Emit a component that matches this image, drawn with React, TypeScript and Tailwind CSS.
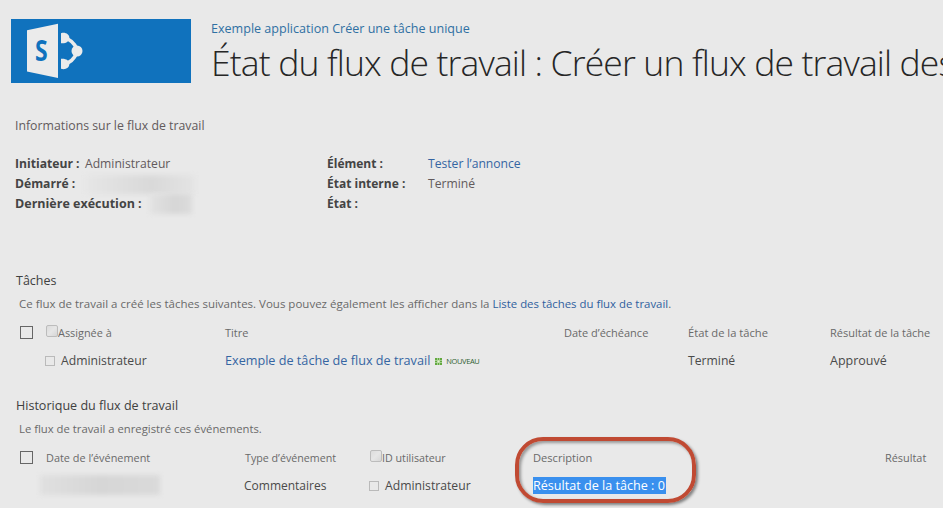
import type { ReactNode } from "react";

function SharePointLogo() {
  return (
    <svg className="block h-16 w-[180px]" viewBox="0 0 180 64">
      <path d="M16 11.2 47 4.8V59L16 52.6Z" fill="#ebebeb" />
      <text
        transform="translate(23.9 42) scale(0.82 1)"
        fontFamily="Open Sans, sans-serif"
        fontWeight="700"
        fontSize="28"
        fill="#1072bd"
      >
        S
      </text>
      <path
        d="M54 19.3C59.5 20.5 63 24 65.5 29.5M54 44.7C59.5 43.5 63 40 65.5 34.5"
        fill="none"
        stroke="#ebebeb"
        strokeWidth="3.6"
      />
      <circle cx="66" cy="32" r="5.5" fill="#ebebeb" />
      <path d="M50 14.3C54 12.8 58.4 15.2 58.4 19C58.4 22.6 54.6 24.8 50 24.2Z" fill="#ebebeb" />
      <path d="M50 49.7C54 51.2 58.4 48.8 58.4 45C58.4 41.4 54.6 39.2 50 39.8Z" fill="#ebebeb" />
    </svg>
  );
}

function Checkbox() {
  return <span className="mt-[3px] block size-[13px] shrink-0 border border-[#666]" />;
}

function PresenceLarge() {
  return (
    <span className="mt-0.5 block size-3 shrink-0 rounded-[2px] border border-[#bcbcbc] bg-linear-to-br from-[#dcdcdc] via-[#e6e6e6] to-[#d6d6d6]" />
  );
}

function PresenceSmall() {
  return <span className="mt-[5px] block size-[10px] shrink-0 border border-[#bababa]" />;
}

function Cell({ className, children }: { className: string; children?: ReactNode }) {
  return <div className={`flex shrink-0 whitespace-nowrap ${className}`}>{children}</div>;
}

function NewBadge() {
  return (
    <span className="ml-[5px] flex items-center">
      <svg className="block size-[7px]" viewBox="0 0 7 7">
        <rect width="7" height="7" fill="#a5cf8e" />
        <path d="M0 0h2v2H0zM5 0h2v2H5zM0 5h2v2H0zM5 5h2v2H5zM3 0h1v2H3zM3 5h1v2H3zM0 3h2v1H0zM5 3h2v1H5z" fill="#62a83f" />
        <rect x="2.5" y="2.5" width="2" height="2" fill="#e3f2cf" />
      </svg>
      <span className="-mt-px ml-1 text-[7.5px] leading-5 tracking-[-0.4px] text-[#2f6030]">NOUVEAU</span>
    </span>
  );
}

export default function App() {
  return (
    <div className="relative h-[508px] w-[943px] overflow-hidden bg-[#e9e9e9] font-['Open_Sans',sans-serif] text-[12.5px] leading-5 text-[#4a4a4a]">
      <header className="flex h-[116px] pt-[19px] pl-[11px]">
        <div className="h-16 w-[180px] shrink-0 bg-[#1072bd]">
          <SharePointLogo />
        </div>
        <div className="ml-5 whitespace-nowrap">
          <a className="block text-[12.55px] leading-5 text-[#2f70a3]">Exemple application Créer une tâche unique</a>
          <h1 className="text-[35.5px] leading-[46px] font-light tracking-[-0.85px] text-[#262626]">
            État du flux de travail : Créer un flux de travail des
          </h1>
        </div>
      </header>

      <section className="pl-[15px]">
        <h2 className="text-[12.3px] text-[#625a5c]">Informations sur le flux de travail</h2>
        <div className="mt-[18px] flex text-[12.15px] text-[#625a5c]">
          <dl className="w-[312px]">
            <div className="flex">
              <dt className="w-[70px] font-bold text-[#444]">Initiateur :</dt>
              <dd className="">Administrateur</dd>
            </div>
            <div className="flex">
              <dt className="w-[70px] font-bold text-[#444]">Démarré :</dt>
              <dd className="mt-px h-[19px] w-[110px] bg-linear-to-r from-[#e6e6e6] via-[#d9d9d9] via-60% to-[#e4e4e4] blur-[2px]" />
            </div>
            <div className="flex">
              <dt className="w-[135px] text-[12.5px] font-bold text-[#444]">Dernière exécution :</dt>
              <dd className="h-5 w-[42px] bg-linear-to-r from-[#e2e2e2] via-[#d6d6d6] via-60% to-[#dcdcdc] blur-[2px]" />
            </div>
          </dl>
          <dl>
            <div className="flex">
              <dt className="w-[101px] text-[12px] font-bold text-[#444]">Élément :</dt>
              <dd className="text-[#3565a2]">Tester l’annonce</dd>
            </div>
            <div className="flex">
              <dt className="w-[101px] text-[12px] font-bold text-[#444]">État interne :</dt>
              <dd>Terminé</dd>
            </div>
            <div className="flex">
              <dt className="w-[101px] text-[12px] font-bold text-[#444]">État :</dt>
            </div>
          </dl>
        </div>
      </section>

      <section className="mt-[57px] pl-[15px]">
        <h2 className="pl-px text-[12.5px] text-[#404040]">Tâches</h2>
        <p className="mt-[3px] pl-1 text-[11.5px] whitespace-nowrap text-[#6a6a6a]">
          Ce flux de travail a créé les tâches suivantes. Vous pouvez également les afficher dans la{" "}
          <a className="text-[11.4px] text-[#2f5f9e]">Liste des tâches du flux de travail</a>.
        </p>
        <div className="mt-[9px] flex pl-[5px] text-[11px] text-[#6a6a6a]">
          <Cell className="w-[205px]">
            <Checkbox />
            <span className="w-[13px]" />
            <PresenceLarge />
            <span className="text-[10.9px]">Assignée à</span>
          </Cell>
          <Cell className="w-[339px]">Titre</Cell>
          <Cell className="w-[124px]">Date d’échéance</Cell>
          <Cell className="w-[142px] text-[11.2px]">État de la tâche</Cell>
          <Cell className="">Résultat de la tâche</Cell>
        </div>
        <div className="mt-2 flex pl-[30px] text-[12.2px]">
          <Cell className="w-[180px]">
            <PresenceSmall />
            <span className="ml-[6px]">Administrateur</span>
          </Cell>
          <Cell className="w-[463px]">
            <a className="-mt-px text-[12.65px] text-[#3565a2]">Exemple de tâche de flux de travail</a>
            <NewBadge />
          </Cell>
          <Cell className="w-[142px]">Terminé</Cell>
          <Cell className="text-[12.5px]">Approuvé</Cell>
        </div>
      </section>

      <section className="mt-[25px] pl-[15px]">
        <h2 className="pl-px text-[12.55px] text-[#404040]">Historique du flux de travail</h2>
        <p className="mt-[3px] pl-1 text-[11.3px] text-[#6a6a6a]">Le flux de travail a enregistré ces événements.</p>
        <div className="mt-[9px] flex pl-[5px] text-[10.9px] text-[#6a6a6a]">
          <Cell className="w-[225px]">
            <Checkbox />
            <span className="ml-[13px]">Date de l’événement</span>
          </Cell>
          <Cell className="w-[125px] text-[10.7px]">Type d’événement</Cell>
          <Cell className="w-[163px] text-[10.7px]">
            <PresenceLarge />
            <span>ID utilisateur</span>
          </Cell>
          <Cell className="w-[352px] text-[11.1px]">Description</Cell>
          <Cell className="">Résultat</Cell>
        </div>
        <div className="mt-2 flex pl-[25px] text-[12.2px]">
          <Cell className="w-[204px]">
            <span className="-mt-px h-5 w-[120px] bg-linear-to-r from-[#e0e0e0] via-[#d6d6d6] to-[#dadada] blur-[2px]" />
          </Cell>
          <Cell className="w-[125px] text-[12px]">Commentaires</Cell>
          <Cell className="w-[164px]">
            <PresenceSmall />
            <span className="ml-[6px]">Administrateur</span>
          </Cell>
          <Cell className="">
            <mark className="mt-px h-[17px] w-[133px] bg-[#3a90ee] text-[12.6px] leading-[18px] text-white">Résultat de la tâche : 0</mark>
          </Cell>
        </div>
      </section>

      <div className="absolute top-[437px] left-[515px] h-[66px] w-[181px] rounded-[28px] border-4 border-[#c04a33] shadow-[2px_2px_3px_rgba(0,0,0,0.45),inset_2px_2px_3px_rgba(0,0,0,0.35)]" />
    </div>
  );
}
